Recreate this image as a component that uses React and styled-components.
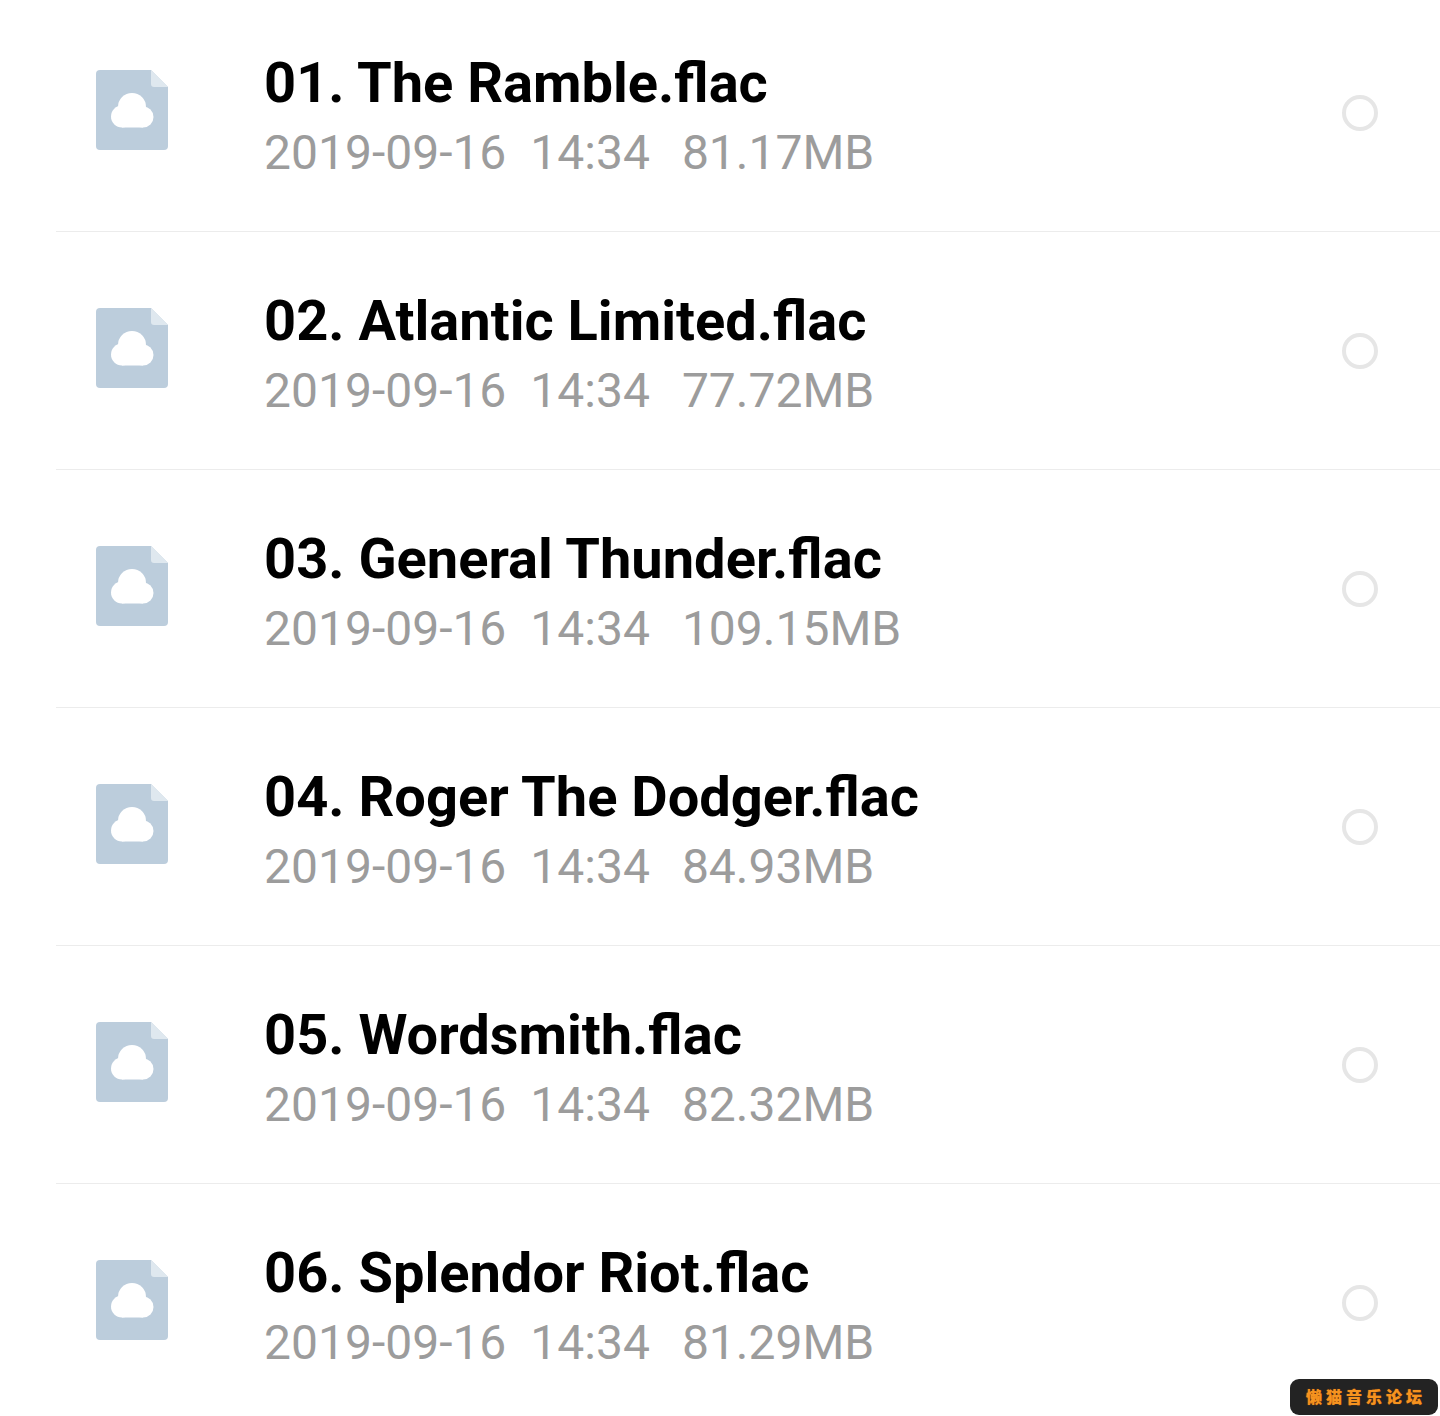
import React from 'react';
import styled, { createGlobalStyle } from 'styled-components';

const GlobalStyle = createGlobalStyle`
 html, body {
  margin: 0;
  padding: 0;
  background: #fff;
 }
 body {
  font-family: Roboto, "Noto Sans", sans-serif;
 }
`;

const Page = styled.div`
 position: relative;
 width: 1440px;
 height: 1416px;
 overflow: hidden;
 background: #fff;
`;
const List = styled.ul`
 list-style: none;
 margin: -6px 0 0 56px;
 padding: 0;
`;
const Row = styled.li`
 display: flex;
 align-items: center;
 height: 238px;
 box-sizing: border-box;
 border-bottom: 1px solid #ececec;
 padding-left: 40px;
`;
const FileIcon = styled.svg`
 flex: none;
 width: 72px;
 height: 80px;
 margin-bottom: 5px;
`;
const Info = styled.div`
 flex: 1;
 margin-left: 96px;
 margin-bottom: -10px;
`;
const Title = styled.div`
 font-size: 56px;
 line-height: 70px;
 font-weight: 700;
 color: #000;
`;
const Meta = styled.div`
 display: flex;
 font-size: 48px;
 line-height: 70px;
 color: #9c9c9c;
`;
const Time = styled.span`
 margin-left: 24px;
`;
const Size = styled.span`
 margin-left: 32px;
`;
const Radio = styled.span`
 flex: none;
 width: 36px;
 height: 36px;
 box-sizing: border-box;
 border: 4px solid #e6e6e6;
 border-radius: 50%;
 margin-right: 62px;
 margin-top: 1px;
`;
const Badge = styled.div`
 position: absolute;
 right: 2px;
 bottom: 1px;
 width: 148px;
 height: 36px;
 padding-bottom: 3px;
 box-sizing: border-box;
 display: flex;
 align-items: center;
 justify-content: center;
 background: #232323;
 border-radius: 9px;
 color: #f59320;
 font-family: "Noto Sans CJK SC", sans-serif;
 font-size: 16px;
 font-weight: 900;
 letter-spacing: 4px;
 text-indent: 4px;
 text-shadow: 0 0 1px #c85f00;
`;

const tracks = [
 { name: '01. The Ramble.flac', size: '81.17MB' },
 { name: '02. Atlantic Limited.flac', size: '77.72MB' },
 { name: '03. General Thunder.flac', size: '109.15MB' },
 { name: '04. Roger The Dodger.flac', size: '84.93MB' },
 { name: '05. Wordsmith.flac', size: '82.32MB' },
 { name: '06. Splendor Riot.flac', size: '81.29MB' },
];

const CloudFile = () => (
 <FileIcon viewBox="0 0 72 80">
  <path
   d="M4 0H55L72 17V76a4 4 0 0 1-4 4H4a4 4 0 0 1-4-4V4a4 4 0 0 1 4-4Z"
   fill="#bccddc"
  />
  <path d="M55 0L72 17H58a3 3 0 0 1-3-3Z" fill="#dfe8ef" />
  <g fill="#fff">
   <circle cx="26" cy="46.500" r="11" />
   <circle cx="36" cy="37" r="14" />
   <circle cx="47" cy="47" r="10.500" />
   <rect x="26" y="40" width="21" height="17.500" />
  </g>
 </FileIcon>
);

const App = () => {
 return (
  <Page>
   <GlobalStyle />
   <List>
    {tracks.map((track) => (
     <Row key={track.name}>
      <CloudFile />
      <Info>
       <Title>{track.name}</Title>
       <Meta>
        <span>2019-09-16</span>
        <Time>14:34</Time>
        <Size>{track.size}</Size>
       </Meta>
      </Info>
      <Radio />
     </Row>
    ))}
   </List>
   <Badge>懒猫音乐论坛</Badge>
  </Page>
 );
};
export default App;
